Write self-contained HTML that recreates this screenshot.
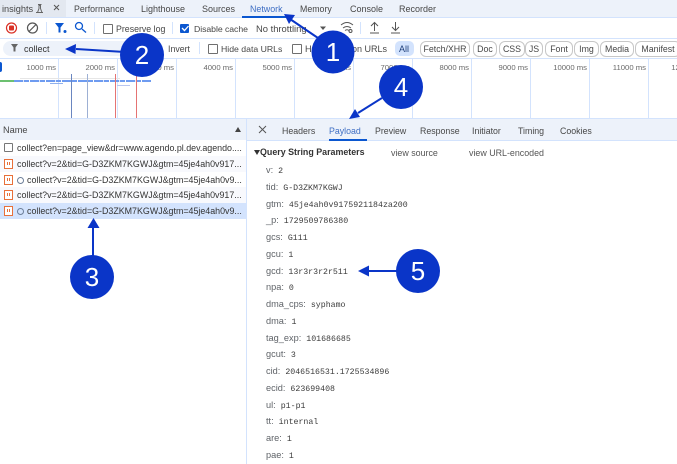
<!DOCTYPE html>
<html><head><meta charset="utf-8"><style>
html,body{margin:0;padding:0;width:677px;height:464px;overflow:hidden;background:#fff}
body{position:relative;font-family:"Liberation Sans",sans-serif;font-size:9.2px;color:#474747}
.t{position:absolute;white-space:nowrap;line-height:12px}
.b{position:absolute}
.chip{position:absolute;top:41px;height:16px;border:1px solid #c7c7c7;border-radius:6px;box-sizing:border-box;text-align:center;line-height:14px;font-size:8.8px;color:#474747;white-space:nowrap;overflow:hidden;background:#fff}
.cb{position:absolute;width:8px;height:8px;border:1px solid #6f6f6f;border-radius:1px;background:#fff}
.tick{position:absolute;top:59px;width:1px;height:59px;background:#d3e3fd}
.ms{position:absolute;top:62px;font-size:7.7px;color:#6a6a6a;text-align:right;width:60px;line-height:11px}
.row{position:absolute;left:0;width:246px;height:16px;line-height:16px;font-size:8.9px;color:#333;white-space:nowrap;overflow:hidden}
.ic{position:absolute;left:4px;top:3px;width:7px;height:8px;border:1px solid #e8703a;background:#fff}
.ic:before,.ic:after{content:"";position:absolute;top:2px;width:1px;height:3px;background:#e8703a}
.ic:before{left:2px}.ic:after{left:4px}
.k{position:absolute;left:266px;font-size:9.2px;color:#5f6368;line-height:12px;white-space:nowrap}
.k span{font-family:"Liberation Mono",monospace;font-size:8.25px;color:#3c3c3c;margin-left:5px}
.dt{position:absolute;top:125px;font-size:8.8px;color:#474747;line-height:12px;white-space:nowrap}
svg{position:absolute;left:0;top:0}
</style></head><body>

<div class="b" style="left:0;top:0;width:677px;height:17px;background:#edf2fa"></div>
<div class="b" style="left:0;top:0;width:66px;height:17px;background:#e3e8f0"></div>
<div class="b" style="left:0;top:17px;width:677px;height:1px;background:#d3e3fd"></div>
<div class="t" style="left:2px;top:3px">insights</div>
<div class="t" style="left:74px;top:3px;font-size:8.8px">Performance</div>
<div class="t" style="left:141px;top:3px;font-size:9px">Lighthouse</div>
<div class="t" style="left:202px;top:3px;font-size:9px">Sources</div>
<div class="t" style="left:250px;top:3px;color:#3f6fc4;font-size:8.9px">Network</div>
<div class="t" style="left:300px;top:3px;font-size:8.8px">Memory</div>
<div class="t" style="left:350px;top:3px;font-size:9px">Console</div>
<div class="t" style="left:399px;top:3px;font-size:9px">Recorder</div>
<div class="b" style="left:242px;top:16px;width:48px;height:2px;background:#0b57d0"></div>

<div class="b" style="left:0;top:38px;width:677px;height:1px;background:#d3e3fd"></div>
<div class="b" style="left:46px;top:22px;width:1px;height:12px;background:#d3e3fd"></div>
<div class="b" style="left:94px;top:22px;width:1px;height:12px;background:#d3e3fd"></div>
<div class="b" style="left:172px;top:22px;width:1px;height:12px;background:#d3e3fd"></div>
<div class="b" style="left:360px;top:22px;width:1px;height:12px;background:#d3e3fd"></div>
<div class="cb" style="left:103px;top:24px"></div>
<div class="t" style="left:116px;top:23px;font-size:8.8px">Preserve log</div>
<div class="b" style="left:180px;top:24px;width:9px;height:9px;background:#0b57d0;border-radius:1px"></div>
<div class="t" style="left:194px;top:23px;font-size:8.7px;letter-spacing:-.05px">Disable cache</div>
<div class="t" style="left:256px;top:23px;font-size:9.4px">No throttling</div>

<div class="b" style="left:3px;top:41px;width:160px;height:15px;background:#edf2fa;border-radius:8px"></div>
<div class="t" style="left:24px;top:43px;color:#333;font-size:9px">collect</div>
<div class="t" style="left:168px;top:43px;font-size:8.8px">Invert</div>
<div class="b" style="left:199px;top:42px;width:1px;height:12px;background:#d3e3fd"></div>
<div class="cb" style="left:208px;top:44px"></div>
<div class="t" style="left:221px;top:43px;font-size:8.7px">Hide data URLs</div>
<div class="cb" style="left:292px;top:44px"></div>
<div class="t" style="left:305px;top:43px">H</div>
<div class="t" style="left:352px;top:43px;font-size:9px">on URLs</div>
<div class="b" style="left:395px;top:41px;width:19px;height:15px;background:#d3e3fd;border-radius:5px"></div>
<div class="t" style="left:399px;top:43px;font-size:9px;color:#1f3f7a">All</div>
<div class="chip" style="left:420px;width:50px">Fetch/XHR</div>
<div class="chip" style="left:473px;width:24px">Doc</div>
<div class="chip" style="left:499px;width:26px">CSS</div>
<div class="chip" style="left:525px;width:18px">JS</div>
<div class="chip" style="left:545px;width:28px">Font</div>
<div class="chip" style="left:574px;width:25px">Img</div>
<div class="chip" style="left:600px;width:34px">Media</div>
<div class="chip" style="left:635px;width:46px">Manifest</div>
<div class="b" style="left:0;top:58px;width:677px;height:1px;background:#d3e3fd"></div>

<div class="tick" style="left:58px"></div><div class="tick" style="left:117px"></div><div class="tick" style="left:176px"></div><div class="tick" style="left:235px"></div><div class="tick" style="left:294px"></div><div class="tick" style="left:353px"></div><div class="tick" style="left:412px"></div><div class="tick" style="left:471px"></div><div class="tick" style="left:530px"></div><div class="tick" style="left:589px"></div><div class="tick" style="left:648px"></div>
<div class="ms" style="left:-4px">1000 ms</div><div class="ms" style="left:55px">2000 ms</div><div class="ms" style="left:114px">3000 ms</div><div class="ms" style="left:173px">4000 ms</div><div class="ms" style="left:232px">5000 ms</div><div class="ms" style="left:291px">6000 ms</div><div class="ms" style="left:350px">7000 ms</div><div class="ms" style="left:409px">8000 ms</div><div class="ms" style="left:468px">9000 ms</div><div class="ms" style="left:527px">10000 ms</div><div class="ms" style="left:586px">11000 ms</div><div class="ms" style="left:645px">12000 ms</div>
<div class="b" style="left:0;top:62px;width:2px;height:10px;background:#0b57d0;border-radius:0 2px 2px 0"></div>
<div class="b" style="left:20px;top:78px;width:100px;height:1px;background:#e6e6e6"></div>
<div class="b" style="left:0;top:80px;width:14px;height:2px;background:#6cc070"></div>
<div class="b" style="left:14px;top:80px;width:137px;height:2px;background:repeating-linear-gradient(90deg,#6e9bf0 0 9px,#dfe8fb 9px 10px,#6e9bf0 10px 15px,#fff 15px 16px)"></div>
<div class="b" style="left:50px;top:83px;width:13px;height:1px;background:#8fb0ee"></div>
<div class="b" style="left:117px;top:85px;width:13px;height:1px;background:#b9c6f0"></div>
<div class="b" style="left:71px;top:74px;width:1px;height:45px;background:#6a86c0"></div>
<div class="b" style="left:87px;top:74px;width:1px;height:45px;background:#9db0d4"></div>
<div class="b" style="left:115px;top:74px;width:1px;height:45px;background:#e57373"></div>
<div class="b" style="left:136px;top:74px;width:1px;height:45px;background:#e57373"></div>
<div class="b" style="left:0;top:118px;width:677px;height:1px;background:#d3e3fd"></div>

<div class="b" style="left:0;top:119px;width:246px;height:21px;background:#edf2fa"></div>
<div class="t" style="left:3px;top:124px">Name</div>
<div class="b" style="left:0;top:140px;width:677px;height:1px;background:#d3e3fd"></div>
<div class="b" style="left:235px;top:127px;width:0;height:0;border-left:3px solid transparent;border-right:3px solid transparent;border-bottom:5px solid #444"></div>

<div class="row" style="top:140px;background:#fff;padding-left:17px;box-sizing:border-box"><div class="b" style="left:4px;top:3px;width:7px;height:7px;border:1px solid #777;border-radius:1px"></div>collect?en=page_view&amp;dr=www.agendo.pl.dev.agendo....</div>
<div class="row" style="top:156px;background:#f8f9fd;padding-left:17px;box-sizing:border-box"><div class="ic"></div>collect?v=2&amp;tid=G-D3ZKM7KGWJ&amp;gtm=45je4ah0v917...</div>
<div class="row" style="top:172px;background:#fff;padding-left:27px;box-sizing:border-box"><div class="ic"></div><div class="b" style="left:17px;top:5px;width:5px;height:5px;border:1px solid #6d7f9a;border-radius:50%"></div>collect?v=2&amp;tid=G-D3ZKM7KGWJ&amp;gtm=45je4ah0v9...</div>
<div class="row" style="top:187px;background:#f8f9fd;padding-left:17px;box-sizing:border-box"><div class="ic"></div>collect?v=2&amp;tid=G-D3ZKM7KGWJ&amp;gtm=45je4ah0v917...</div>
<div class="row" style="top:203px;background:#d3e3fd;padding-left:27px;box-sizing:border-box"><div class="ic"></div><div class="b" style="left:17px;top:5px;width:5px;height:5px;border:1px solid #6d7f9a;border-radius:50%"></div>collect?v=2&amp;tid=G-D3ZKM7KGWJ&amp;gtm=45je4ah0v9...</div>

<div class="b" style="left:246px;top:119px;width:1px;height:345px;background:#d3e3fd"></div>
<div class="b" style="left:247px;top:119px;width:430px;height:21px;background:#edf2fa"></div>
<div class="dt" style="left:282px">Headers</div>
<div class="dt" style="left:329px;color:#3f6fc4">Payload</div>
<div class="dt" style="left:375px">Preview</div>
<div class="dt" style="left:420px">Response</div>
<div class="dt" style="left:472px">Initiator</div>
<div class="dt" style="left:518px">Timing</div>
<div class="dt" style="left:560px">Cookies</div>
<div class="b" style="left:329px;top:139px;width:38px;height:2px;background:#0b57d0"></div>

<div class="b" style="left:254px;top:150px;width:0;height:0;border-left:3px solid transparent;border-right:3px solid transparent;border-top:5px solid #333"></div>
<div class="t" style="left:260px;top:146px;font-weight:bold;font-size:8.9px;color:#333">Query String Parameters</div>
<div class="t" style="left:391px;top:147px;font-size:8.9px;color:#555">view source</div>
<div class="t" style="left:469px;top:147px;font-size:8.9px;color:#555">view URL-encoded</div>

<div class="k" style="top:164px">v:<span>2</span></div>
<div class="k" style="top:181px">tid:<span>G-D3ZKM7KGWJ</span></div>
<div class="k" style="top:198px">gtm:<span>45je4ah0v9175921184za200</span></div>
<div class="k" style="top:214px">_p:<span>1729509786380</span></div>
<div class="k" style="top:231px">gcs:<span>G111</span></div>
<div class="k" style="top:248px">gcu:<span>1</span></div>
<div class="k" style="top:265px">gcd:<span>13r3r3r2r511</span></div>
<div class="k" style="top:281px">npa:<span>0</span></div>
<div class="k" style="top:298px">dma_cps:<span>syphamo</span></div>
<div class="k" style="top:315px">dma:<span>1</span></div>
<div class="k" style="top:332px">tag_exp:<span>101686685</span></div>
<div class="k" style="top:348px">gcut:<span>3</span></div>
<div class="k" style="top:365px">cid:<span>2046516531.1725534896</span></div>
<div class="k" style="top:382px">ecid:<span>623699408</span></div>
<div class="k" style="top:399px">ul:<span>p1-p1</span></div>
<div class="k" style="top:415px">tt:<span>internal</span></div>
<div class="k" style="top:432px">are:<span>1</span></div>
<div class="k" style="top:449px">pae:<span>1</span></div>

<svg width="677" height="464" viewBox="0 0 677 464" fill="none">
  <path d="M36 12.500h7M37.500 12.500l1.500-4v-3h1.500v3l1.500 4M38 4.500h3.500" stroke="#666" stroke-width="1"/>
  <path d="M54 5l5 5M59 5l-5 5" stroke="#555" stroke-width="1"/>
  <circle cx="11.500" cy="28" r="5" stroke="#d93025" stroke-width="1.200"/>
  <rect x="9" y="25.500" width="5" height="5" rx="1" fill="#d93025"/>
  <circle cx="32.500" cy="28" r="5" stroke="#555" stroke-width="1.200"/>
  <path d="M29 31.500l7-7" stroke="#555" stroke-width="1.200"/>
  <path d="M55 23h9l-3.500 4.500v5h-2v-5z" fill="#0b57d0"/>
  <circle cx="65" cy="31.500" r="1.500" fill="#0b57d0"/>
  <circle cx="79" cy="26" r="3.500" stroke="#0b57d0" stroke-width="1.300"/>
  <path d="M82 29l4 3.500" stroke="#0b57d0" stroke-width="1.300"/>
  <path d="M182 28l2.500 2.500 4-4.500" stroke="#fff" stroke-width="1.300"/>
  <path d="M320 26.500h6l-3 3.500z" fill="#555"/>
  <path d="M341 25q6-5 12 0M343 28q4-3 8 0M345 30.500q2-1.500 4 0" stroke="#555" stroke-width="1"/>
  <circle cx="350.500" cy="31" r="1.500" stroke="#555"/>
  <path d="M374.500 31v-8M371 26l3.500-3.500 3.500 3.500M370 33h9" stroke="#555" stroke-width="1"/>
  <path d="M395.500 22v8M392 27l3.500 3.500 3.500-3.500M391 33h9" stroke="#555" stroke-width="1"/>
  <path d="M11 44h7l-2.500 3.500v4h-2v-4z" fill="#666"/>
  <path d="M259 126l7 7M266 126l-7 7" stroke="#555" stroke-width="1"/>

  <g stroke="#0a35c8" stroke-width="2">
    <path d="M318 38L290 19"/>
    <path d="M125 52L76 49"/>
    <path d="M93 256L93 226"/>
    <path d="M382 98L358 113"/>
    <path d="M397 271L368 271"/>
  </g>
  <g fill="#0a35c8">
    <path d="M284 14l11 1-6 9z"/>
    <path d="M65 49l11-5-.5 10z"/>
    <path d="M93.500 218l6 10h-12z"/>
    <path d="M349 119l6-10 5 8z"/>
    <path d="M358 271l11-5.500v11z"/>
    <circle cx="333" cy="52" r="21.500"/>
    <circle cx="142" cy="55" r="22"/>
    <circle cx="92" cy="277" r="22"/>
    <circle cx="401" cy="87" r="22"/>
    <circle cx="418" cy="271" r="22"/>
  </g>
  <g fill="#fff" font-family="Liberation Sans, sans-serif" font-size="26" text-anchor="middle">
    <text x="333" y="61">1</text>
    <text x="142" y="64">2</text>
    <text x="92" y="286">3</text>
    <text x="401" y="96">4</text>
    <text x="418" y="280">5</text>
  </g>
</svg>
</body></html>
